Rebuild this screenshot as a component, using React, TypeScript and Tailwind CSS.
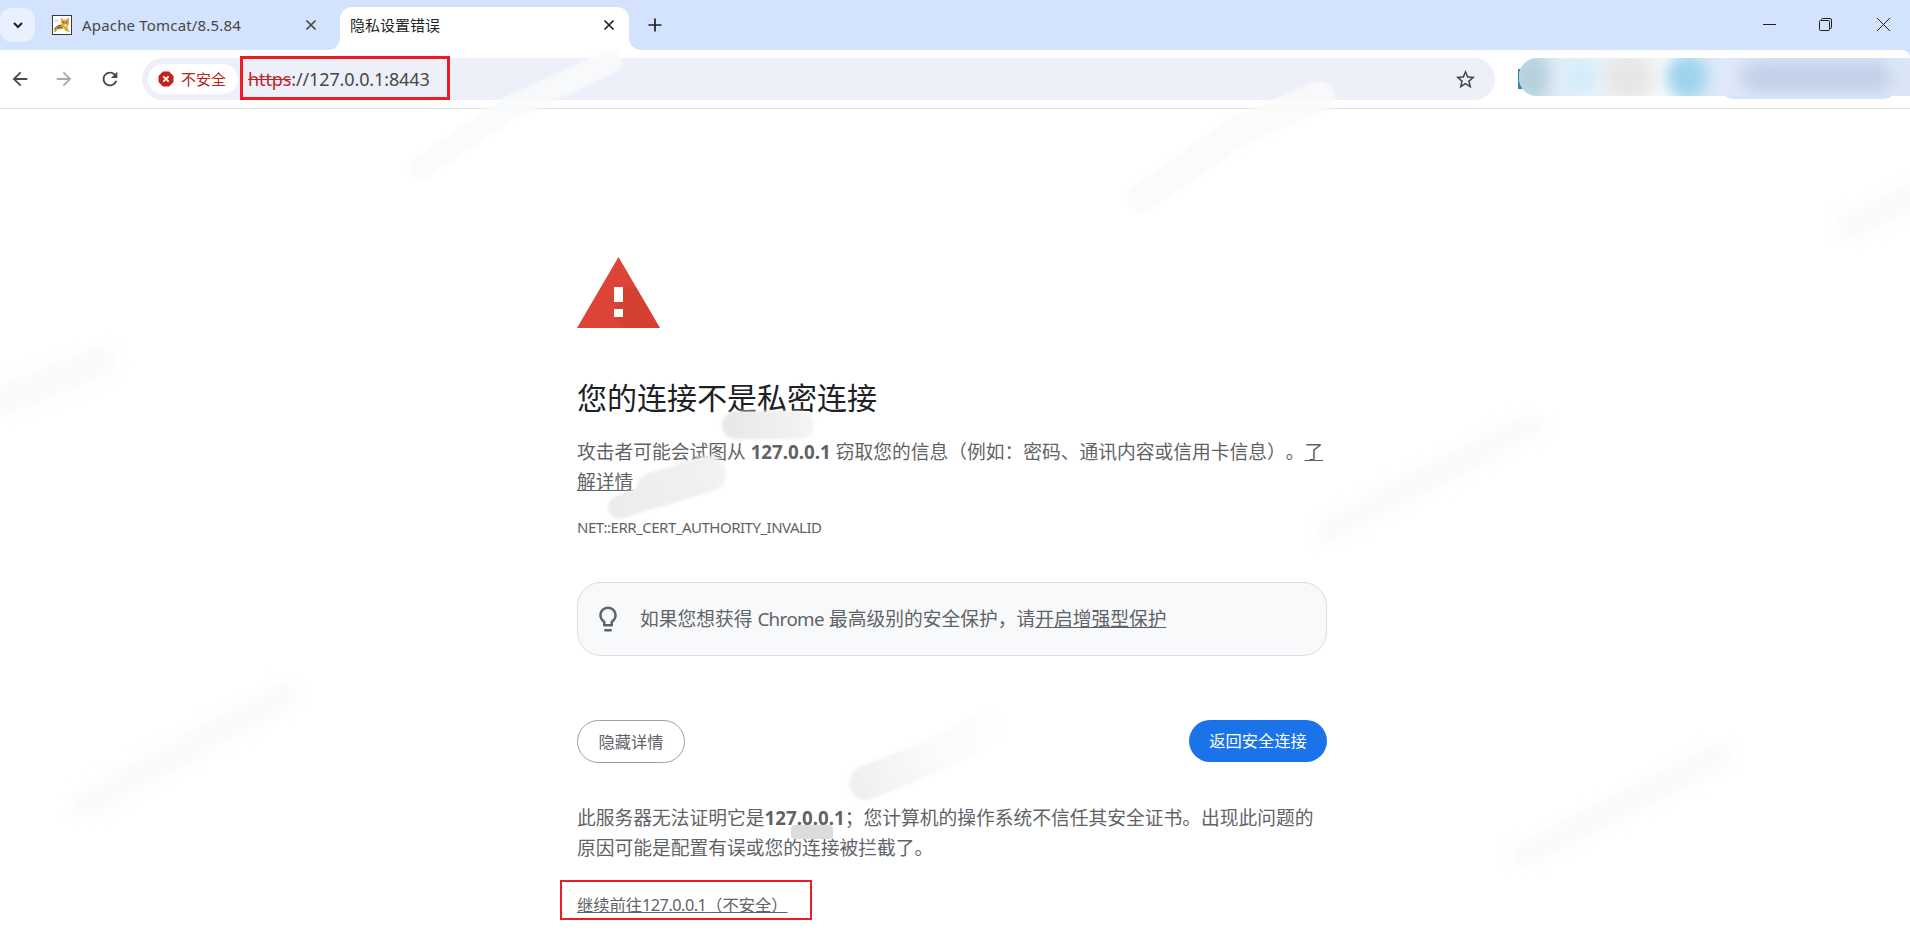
const sans = 'font-["Noto_Sans","Noto_Sans_CJK_SC",sans-serif]';

function Favicon() {
  return (
    <svg width="20" height="20" viewBox="0 0 20 20" className="shrink-0">
      <rect x="0.5" y="0.5" width="19" height="19" fill="#fff" stroke="#3a3a3a" />
      <path d="M8.5 2.5 L11 4.5 L14 4.5 L17 2.5 L17 9 L15.5 11.5 L16 14 L18 17 L13.5 16 L12 13.5 L8 14.5 L5.5 14 L4 17 L2 17 L3.5 12.5 L7 10 L9.5 9 Z" fill="#d9a845" />
      <path d="M2.5 15 C3.5 11.5 6 10.5 9 10.5 M5 14 C6 12.5 8 12 10 12.5 M10.5 7 L12.5 8 M13.5 8 L15.5 7" fill="none" stroke="#4a3a20" strokeWidth="0.9" />
      <path d="M11.5 9.5 L15 9.5 L13.5 12 Z" fill="#f6e7c4" />
      <path d="M2 4 L7 4 L6 7 L3 8 Z" fill="#e8e4da" />
    </svg>
  );
}

function CloseX({ color }: { color: string }) {
  return (
    <svg width="12" height="12" viewBox="0 0 12 12" fill="none" stroke={color} strokeWidth="1.7" className="shrink-0">
      <path d="M1.5 1.5 L10.5 10.5 M10.5 1.5 L1.5 10.5" />
    </svg>
  );
}

function TabStrip() {
  return (
    <div className="flex h-[50px] shrink-0 items-start bg-[#d3e3fd]">
      <div className="mt-2 flex h-[34px] w-[35px] shrink-0 items-center justify-center rounded-[12px] bg-[#e9f1fe]">
        <svg width="12" height="12" viewBox="0 0 12 12" fill="none" stroke="#1f1f1f" strokeWidth="2">
          <path d="M2 4 L6 8 L10 4" />
        </svg>
      </div>
      <div className="flex h-[50px] w-[305px] shrink-0 items-center pl-[17px] pr-[23px]">
        <Favicon />
        <span className="ml-[10px] flex-1 text-[15px] leading-5 tracking-[0.18px] text-[#474747]">Apache Tomcat/8.5.84</span>
        <CloseX color="#474747" />
      </div>
      <div className="relative mt-[7px] flex h-[43px] w-[289px] shrink-0 items-center rounded-t-[12px] bg-white pb-[7px] pl-[10px] pr-[14px]">
        <div className="absolute -left-3 bottom-0 h-3 w-3 bg-white">
          <div className="h-3 w-3 rounded-br-[12px] bg-[#d3e3fd]" />
        </div>
        <span className="flex-1 text-[15px] leading-5 text-[#1f1f1f]">隐私设置错误</span>
        <CloseX color="#1f1f1f" />
        <div className="absolute -right-3 bottom-0 h-3 w-3 bg-white">
          <div className="h-3 w-3 rounded-bl-[12px] bg-[#d3e3fd]" />
        </div>
      </div>
      <div className="ml-[19px] flex h-[50px] items-center">
        <svg width="14" height="14" viewBox="0 0 14 14" stroke="#1f1f1f" strokeWidth="1.7">
          <path d="M7 0.5 V13.5 M0.5 7 H13.5" />
        </svg>
      </div>
      <div className="flex flex-1 items-center justify-end gap-[43px] self-stretch pb-[2px] pr-[20px]">
        <svg width="13" height="13" viewBox="0 0 13 13" stroke="#1f1f1f" strokeWidth="1" fill="none">
          <path d="M0 6.5 H13" />
        </svg>
        <svg width="13" height="13" viewBox="0 0 13 13" stroke="#1f1f1f" strokeWidth="1" fill="none">
          <rect x="0.5" y="2.5" width="10" height="10" rx="1" />
          <path d="M2.5 2.5 V1.5 Q2.5 0.5 3.5 0.5 H11 Q12.5 0.5 12.5 2 V9.5 Q12.5 10.5 11 10.5" />
        </svg>
        <svg width="13" height="13" viewBox="0 0 13 13" stroke="#1f1f1f" strokeWidth="1" fill="none" className="ml-[2px]">
          <path d="M0 0 L13 13 M13 0 L0 13" />
        </svg>
      </div>
    </div>
  );
}

function BlurredProfile() {
  return (
    <div className="relative ml-[23px] h-full flex-1 self-stretch overflow-hidden">
      <div className="absolute left-0 top-[19px] h-[20px] w-[6px] bg-[#2c86ad]" />
      <div className="absolute bottom-[9px] left-[202px] right-[13px] top-[20px] rounded-b-[14px] bg-[#d3e3fd]" />
      <div className="absolute bottom-[12px] left-[1px] right-0 top-[8px] overflow-hidden rounded-l-[18px] bg-[linear-gradient(90deg,#d8e6ee_0%,#e3f0fa_12%,#ecf3fa_22%,#f2f3f5_30%,#f7f9fb_37%,#d4ebf7_44%,#dfe9f9_52%,#dbe6f8_100%)]">
        <div className="absolute left-[-6px] top-[-6px] h-[50px] w-[36px] rounded-full bg-[#b5d0dd] blur-[8px]" />
        <div className="absolute left-[45px] top-[2px] h-[34px] w-[34px] rounded-full bg-[#d2ecfa] blur-[8px]" />
        <div className="absolute left-[85px] top-[-4px] h-[46px] w-[50px] rounded-full bg-[#e6e6e6] blur-[8px]" />
        <div className="absolute left-[148px] top-[-2px] h-[42px] w-[40px] rounded-full bg-[#9fd3ec] blur-[7px]" />
        <div className="absolute left-[222px] top-[4px] h-[30px] w-[150px] rounded-full bg-[#c0d0e8] blur-[8px]" />
      </div>
    </div>
  );
}

function Toolbar() {
  return (
    <div className="flex h-[59px] shrink-0 items-center rounded-tr-[8px] border-b border-[#e1e2e4] bg-white">
      <svg width="22" height="22" viewBox="0 0 24 24" fill="#474747" className="ml-[9px] shrink-0">
        <path d="M20 11H7.83l5.59-5.59L12 4l-8 8 8 8 1.41-1.41L7.83 13H20v-2z" />
      </svg>
      <svg width="22" height="22" viewBox="0 0 24 24" fill="#a9abad" className="ml-[22px] shrink-0">
        <path d="M12 4l-1.41 1.41L16.17 11H4v2h12.17l-5.58 5.59L12 20l8-8z" />
      </svg>
      <svg width="22" height="22" viewBox="0 0 24 24" fill="#474747" className="ml-6 shrink-0">
        <path d="M17.65 6.35A7.958 7.958 0 0012 4c-4.42 0-7.99 3.58-7.99 8s3.57 8 7.99 8c3.73 0 6.84-2.55 7.73-6h-2.08A5.99 5.99 0 0112 18c-3.31 0-6-2.69-6-6s2.69-6 6-6c1.66 0 3.14.69 4.22 1.78L13 11h7V4l-2.35 2.35z" />
      </svg>
      <div className="ml-[21px] flex h-[42px] w-[1353px] shrink-0 items-center rounded-full bg-[#edf0f9] pl-[6px] pr-[18px]">
        <div className="flex h-[30px] w-[90px] shrink-0 items-center rounded-full bg-white pl-[10px]">
          <svg width="16" height="16" viewBox="0 0 16 16" className="shrink-0">
            <path d="M5 0.5 H11 L15.5 5 V11 L11 15.5 H5 L0.5 11 V5 Z" fill="#c5221f" />
            <path d="M5.3 5.3 L10.7 10.7 M10.7 5.3 L5.3 10.7" stroke="#fff" strokeWidth="1.8" />
          </svg>
          <span className="ml-[7px] text-[15px] leading-5 text-[#b3261e]">不安全</span>
        </div>
        <div className="relative ml-[10px] flex-1 text-[18px] leading-6 tracking-[-0.12px] text-[#474747]">
          <span className="text-[#c5221f] line-through">https</span>
          <span>://127.0.0.1:8443</span>
          <span className="absolute -left-2 -top-[11px] h-[44px] w-[210px] border-[3px] border-[#ed1c24]" />
        </div>
        <svg width="23" height="23" viewBox="0 0 24 24" fill="#474747" className="shrink-0">
          <path d="M22 9.24l-7.19-.62L12 2 9.19 8.63 2 9.24l5.46 4.73L5.82 21 12 17.27 18.18 21l-1.63-7.03L22 9.24zM12 15.4l-3.76 2.27 1-4.28-3.32-2.88 4.38-.38L12 6.1l1.71 4.04 4.38.38-3.32 2.88 1 4.28L12 15.4z" />
        </svg>
      </div>
      <BlurredProfile />
    </div>
  );
}

function Triangle() {
  return (
    <svg width="83" height="71" viewBox="0 0 83 71" className="block">
      <path d="M41.5 0 L83 71 H0 Z" fill="#dc4437" />
      <path d="M37 60 L47 71 H83 L59 30 L46 30 Z" fill="#c53929" opacity="0.35" />
      <rect x="37" y="30" width="9" height="15" fill="#fff" />
      <rect x="37" y="52" width="9" height="8" fill="#fff" />
    </svg>
  );
}

function Watermarks() {
  return (
    <svg className="pointer-events-none absolute inset-0 h-full w-full" width="1910" height="937" viewBox="0 0 1910 937">
      <defs>
        <filter id="wm" x="-30%" y="-60%" width="160%" height="220%">
          <feGaussianBlur stdDeviation="6" />
        </filter>
        <filter id="wmSoft" x="-10%" y="-10%" width="120%" height="120%">
          <feGaussianBlur stdDeviation="1.5" />
        </filter>
        <linearGradient id="wmA" gradientUnits="userSpaceOnUse" x1="860" y1="790" x2="995" y2="722">
          <stop offset="0" stopColor="#f0f0f0" />
          <stop offset="0.5" stopColor="#fafafa" />
          <stop offset="1" stopColor="#fefefe" />
        </linearGradient>
        <linearGradient id="wmB" gradientUnits="userSpaceOnUse" x1="620" y1="510" x2="715" y2="465">
          <stop offset="0" stopColor="#ececec" />
          <stop offset="1" stopColor="#f2f2f2" />
        </linearGradient>
        <linearGradient id="wmC" gradientUnits="userSpaceOnUse" x1="730" y1="425" x2="810" y2="425">
          <stop offset="0" stopColor="#e8e8e8" />
          <stop offset="1" stopColor="#f4f4f4" />
        </linearGradient>
      </defs>
      <g fill="none" strokeLinecap="round" stroke="#fafafa" filter="url(#wm)">
        <path d="M-10 405 L100 362" strokeWidth="30" />
        <path d="M85 805 L285 695" strokeWidth="26" />
        <path d="M1328 530 L1530 425" strokeWidth="24" />
        <path d="M1525 855 L1720 755" strokeWidth="24" />
        <path d="M1850 225 L1925 192" strokeWidth="26" />
      </g>
      <g fill="none" strokeLinecap="round" filter="url(#wmSoft)">
        <path d="M420 168 L510 108 L610 62" stroke="#f9fafb" strokeWidth="24" opacity="0.85" />
        <path d="M1142 198 L1240 130 L1320 96" stroke="#fafafb" strokeWidth="30" opacity="0.85" />
        <path d="M736 425 L800 425" stroke="url(#wmC)" strokeWidth="28" />
        <path d="M620 507 L652 496" stroke="url(#wmB)" strokeWidth="24" />
        <path d="M654 490 L708 474" stroke="url(#wmB)" strokeWidth="36" />
        <path d="M866 783 L930 757 L990 726" stroke="url(#wmA)" strokeWidth="34" />
      </g>
      <rect x="791" y="825" width="42" height="14" rx="4" fill="#dcdcdc" />
    </svg>
  );
}

function Main() {
  return (
    <main className="ml-[577px] w-[750px] pt-[148px] text-[18.75px] leading-[30px] text-[#5f6368] [text-spacing-trim:space-all]">
      <Triangle />
      <h1 className="mt-[52px] text-[30px] font-normal leading-9 text-[#202124]">您的连接不是私密连接</h1>
      <p className="mt-[21px]">
        攻击者可能会试图从 <b>127.0.0.1</b> 窃取您的信息（例如：密码、通讯内容或信用卡信息）。<span className="underline">了解详情</span>
      </p>
      <p className="mt-5 text-[15px] uppercase leading-5 tracking-[-0.5px]">NET::ERR_CERT_AUTHORITY_INVALID</p>
      <div className="mt-[45px] flex h-[74px] items-center rounded-[24px] border border-[#dadce0] bg-[#f8f9fa] pl-[15px]">
        <svg width="30" height="30" viewBox="0 0 24 24" fill="#5f6368" className="shrink-0">
          <path d="M9 21c0 .55.45 1 1 1h4c.55 0 1-.45 1-1v-1H9v1zm3-19C8.14 2 5 5.14 5 9c0 2.38 1.19 4.47 3 5.74V17c0 .55.45 1 1 1h6c.55 0 1-.45 1-1v-2.26c1.81-1.27 3-3.36 3-5.74 0-3.86-3.14-7-7-7zm2.85 11.1l-.85.6V16h-4v-2.3l-.85-.6C7.8 12.16 7 10.63 7 9c0-2.76 2.24-5 5-5s5 2.24 5 5c0 1.63-.8 3.16-2.15 4.1z" />
        </svg>
        <span className="ml-[17px]">
          如果您想获得 <span className="tracking-[-0.6px]">Chrome</span> 最高级别的安全保护，请<span className="underline">开启增强型保护</span>
        </span>
      </div>
      <div className="mt-16 flex items-start justify-between">
        <button className="h-[43px] w-[108px] rounded-full border border-[#9aa0a6] bg-white text-[16.25px] leading-5 text-[#5f6368]">隐藏详情</button>
        <button className="h-[42px] w-[138px] rounded-full bg-[#1a73e8] text-[16.25px] leading-5 text-white">返回安全连接</button>
      </div>
      <p className="mt-10">
        此服务器无法证明它是<b>127.0.0.1</b>；您计算机的操作系统不信任其安全证书。出现此问题的原因可能是配置有误或您的连接被拦截了。
      </p>
      <div className="relative mt-8 text-[16.25px] leading-5">
        <span className="underline">继续前往<span className="tracking-[-0.5px]">127.0.0.1</span>（不安全）</span>
        <span className="absolute -left-[17px] -top-[15px] h-10 w-[252px] border-[2px] border-[#ed1c24]" />
      </div>
    </main>
  );
}

export default function App() {
  return (
    <div className={`relative flex h-[937px] w-[1910px] flex-col overflow-hidden bg-white ${sans}`}>
      <div className="bg-[#d3e3fd]">
        <TabStrip />
        <Toolbar />
      </div>
      <Main />
      <Watermarks />
    </div>
  );
}
